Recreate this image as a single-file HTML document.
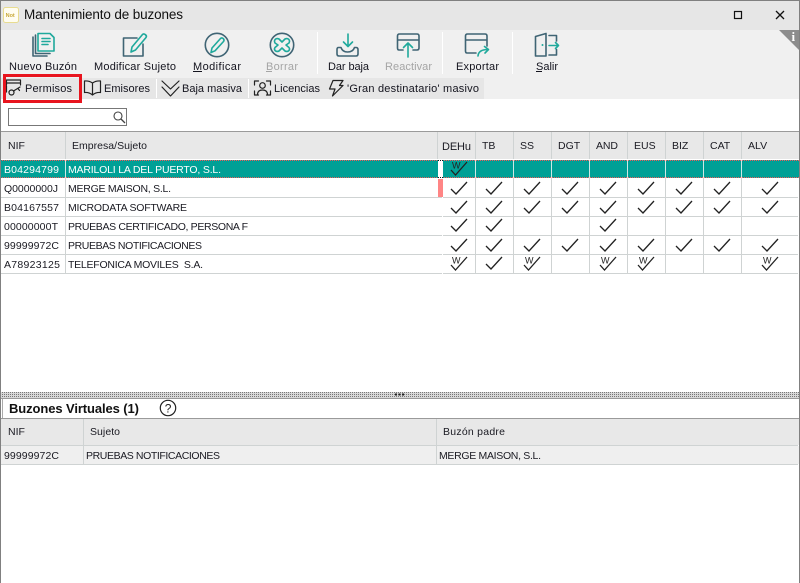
<!DOCTYPE html>
<html><head><meta charset="utf-8"><title>Mantenimiento de buzones</title>
<style>
html,body{margin:0;padding:0;background:#fff;width:800px;height:583px;overflow:hidden}
svg{display:block}
text{font-family:"Liberation Sans",Arial,sans-serif;fill:#111}
.tb{font-size:11px;fill:#14141e}
.dis{font-size:11px;fill:#a5a5a5}
.t{font-size:10.5px;fill:#1a1a22}
.h{font-size:10.5px;fill:#1a1a22}
.w{fill:#fff;font-size:10.5px}
.ic{fill:none;stroke:#3f6474;stroke-width:1.6;stroke-linejoin:round;stroke-linecap:round}
.te{fill:none;stroke:#1fa99c;stroke-width:1.6;stroke-linejoin:round;stroke-linecap:round}
.k{fill:none;stroke:#222;stroke-width:1.2;stroke-linejoin:round;stroke-linecap:round}
.l{stroke:#cfd3d3;stroke-width:1;shape-rendering:crispEdges}
</style></head><body>
<svg width="800" height="583" viewBox="0 0 800 583" xmlns="http://www.w3.org/2000/svg">
<defs>
<path id="c" d="M0 7 L5 12 L16 0" fill="none" stroke="#222" stroke-width="1.3"/>
<g id="wc"><text x="1" y="6.6" style="font-size:9px;fill:#222">W</text><path d="M0 8 L4.5 13 L16 0" fill="none" stroke="#222" stroke-width="1.3"/></g>
<pattern id="dots" width="2" height="2" patternUnits="userSpaceOnUse"><rect width="2" height="2" fill="#d8d8d8"/><rect width="1" height="1" fill="#777"/></pattern>
<pattern id="rd" width="2" height="1" patternUnits="userSpaceOnUse"><rect width="1" height="1" fill="#f05a5a"/><rect x="1" width="1" height="1" fill="#00a096"/></pattern>
</defs>

<rect width="800" height="583" fill="#fff"/>
<rect x="0" y="0" width="800" height="30" fill="#e6e6e6"/>
<rect x="0" y="30" width="800" height="69" fill="#f0f0f0"/>
<rect x="0" y="78" width="484" height="21" fill="#e6e6e6"/>

<!-- Title bar -->
<rect x="3.5" y="7.5" width="15" height="15" rx="2" fill="#fffdf0" stroke="#e8dc90"/>
<text x="5.6" y="17" style="font-size:5.5px;fill:#c9a93a;font-weight:bold">Not</text>
<text x="24" y="19" textLength="159" style="font-size:13.5px;fill:#111">Mantenimiento de buzones</text>
<rect x="734.5" y="11.5" width="7" height="7" fill="none" stroke="#111" stroke-width="1.2"/>
<path d="M776 11 L784 19 M784 11 L776 19" stroke="#111" stroke-width="1.3" fill="none"/>

<!-- info corner -->
<path d="M779 30 H799 V50 Z" fill="#8c8c8c"/>
<text x="791.5" y="41" style="font-family:'Liberation Serif',serif;font-weight:bold;font-size:13px;fill:#fff">i</text>

<!-- Toolbar separators -->
<path d="M317.5 32V74M442.5 32V74M512.5 32V74" stroke="#fff" stroke-width="1"/>

<!-- Nuevo Buzon icon -->
<path class="ic" d="M33 37V56H47M35.5 35V53.500H50"/>
<path class="te" d="M38 33.500H50L54 37.500V51H38Z M42 38.500H50M42 41.500H50M42 44.500H48"/>
<!-- Modificar sujeto -->
<path class="ic" d="M137 38H123.500V56H143V44"/>
<path class="te" d="M131 52L132 47L142.500 34.500C144 33 147.500 35.500 146 37.500L135.500 50Z"/>
<!-- Modificar -->
<circle class="ic" cx="217" cy="45" r="11.700"/>
<path class="te" d="M211 52.500L212 48L220.500 38.500C222.500 37 225 39.500 223.500 41.500L215 50.800Z"/>
<!-- Borrar -->
<circle class="ic" cx="282" cy="45" r="11.700"/>
<path class="te" d="M282 42L285 39C288 37.500 290.500 40 289 43L286 45L289 47.500C290.500 50 288 52.500 285 51L282 48L279 51C276 52.500 273.500 50 275 47.500L278 45L275 43C273.500 40 276 37.500 279 39Z"/>
<!-- Dar baja -->
<path class="te" d="M348 34V46M343.500 42L348 46.500L352.500 42"/>
<path class="ic" d="M341 47.500H338.500Q337 47.500 337 49.500V54Q337 56 339 56H356Q358 56 358 54V49.500Q358 47.500 356 47.500H354.500Q353 52 347.500 52Q342.500 52 341 47.500Z"/>
<!-- Reactivar -->
<path class="ic" d="M403 50H399Q397.500 50 397.500 48V36Q397.500 34 399.500 34H417Q419 34 419 36V48Q419 50 417 50H413M397.500 40H419"/>
<path class="te" d="M408 57V43M403.500 47.500L408 43L412.500 47.500"/>
<!-- Exportar -->
<path class="ic" d="M476 53H467Q465.500 53 465.500 51V36Q465.500 34 467.500 34H485Q487 34 487 36V46M465.500 40H487"/>
<path class="te" d="M478 56Q478.500 49.500 488 49.500M484.500 46.500L488.500 49.500L485 53"/>
<!-- Salir -->
<path class="ic" d="M535.500 36.500L546 33.500V56H535.500ZM549 35.500H556.500V41M549 55H556.500V49.500"/>
<path class="te" d="M549 45.500H558.500M555.500 42.500L558.500 45.500L555.500 48.500"/>
<circle cx="542.500" cy="45" r="1" fill="#1fa99c"/>

<!-- Toolbar labels -->
<text class="tb" x="9" y="70" textLength="68">Nuevo Buzón</text>
<text class="tb" x="94" y="70" textLength="82">Modificar Sujeto</text>
<text class="tb" x="193" y="70" textLength="48">Modificar</text>
<rect x="193" y="71" width="9" height="1" fill="#14141e"/>
<text class="dis" x="266" y="70" textLength="32">Borrar</text>
<rect x="266" y="71" width="6" height="1" fill="#a5a5a5"/>
<text class="tb" x="328" y="70" textLength="41">Dar baja</text>
<text class="dis" x="385" y="70" textLength="47">Reactivar</text>
<text class="tb" x="456" y="70" textLength="43">Exportar</text>
<text class="tb" x="536" y="70" textLength="22">Salir</text>
<rect x="536" y="71" width="6" height="1" fill="#14141e"/>

<!-- Tabs -->
<path d="M156.500 79V98M248.500 79V98M79.500 79V98" stroke="#fff"/>
<text class="tb" x="25" y="92" textLength="47">Permisos</text>
<text class="tb" x="104" y="92" textLength="46">Emisores</text>
<text class="tb" x="182" y="92" textLength="60">Baja masiva</text>
<text class="tb" x="274" y="92" textLength="46">Licencias</text>
<text class="tb" x="347" y="92" textLength="132">'Gran destinatario' masivo</text>
<!-- tab icons -->
<path class="k" d="M6.500 85V80H20.500V85M6.500 83H20.500M6.500 86V92"/>
<circle class="k" cx="11.500" cy="92.500" r="2.500"/>
<path class="k" d="M13.500 91L20 87M18 88.500L19.500 90.500"/>
<path class="k" d="M92.500 83Q89 80.500 84.500 81V92.500Q89 92 92.500 95Q96 92 100.500 92.500V81Q96 80.500 92.500 83ZM92.500 83V95"/>
<path class="k" d="M162 81L170.500 89L179 81M162 87L170.500 96L179 87"/>
<path class="k" d="M254.500 85V81H258.500M266.500 81H270.500V85M254.500 91V95H258.500M266.500 95H270.500V91"/>
<circle class="k" cx="262.500" cy="85.500" r="2.800"/>
<path class="k" d="M257.500 94Q258 90 262.500 90Q267 90 267.500 94"/>
<path class="k" d="M333 80.500H343L339.500 85.500H343L332.500 96L335 89H329.500Z"/>
<!-- Red highlight -->
<rect x="4.500" y="75.500" width="76" height="26" fill="none" stroke="#e8141e" stroke-width="3"/>

<!-- Search -->
<rect x="8.500" y="108.500" width="118" height="17" fill="#fff" stroke="#777"/>
<circle cx="118" cy="116" r="4" fill="none" stroke="#444" stroke-width="1.100"/>
<path d="M121 119L125 123" stroke="#444" stroke-width="1.300"/>

<!-- Main grid header -->
<rect x="1" y="132" width="798" height="27" fill="#e8e8e8"/>
<rect x="0" y="131" width="800" height="1" fill="#9a9a9a"/>
<path class="l" d="M65.500 132V159M437.500 132V159M475.500 132V159M513.500 132V159M551.500 132V159M589.500 132V159M627.500 132V159M665.500 132V159M703.500 132V159M741.500 132V159"/>
<text class="h" x="8" y="149">NIF</text>
<text class="h" x="72" y="149" textLength="75">Empresa/Sujeto</text>
<text x="442" y="150" textLength="29" style="font-size:11px;fill:#1a1a22">DEHu</text>
<text class="h" x="482" y="149">TB</text>
<text class="h" x="520" y="149">SS</text>
<text class="h" x="558" y="149">DGT</text>
<text class="h" x="596" y="149" textLength="22">AND</text>
<text class="h" x="634" y="149">EUS</text>
<text class="h" x="672" y="149">BIZ</text>
<text class="h" x="710" y="149">CAT</text>
<text class="h" x="748" y="149">ALV</text>

<!-- Grid lines -->
<path class="l" d="M1 197.500H442M443 197.500H798M1 216.500H442M443 216.500H798M1 235.500H442M443 235.500H798M1 254.500H442M443 254.500H798M1 273.500H442M443 273.500H798"/>
<path class="l" d="M65.500 178V273M475.500 178V273M513.500 178V273M551.500 178V273M589.500 178V273M627.500 178V273M665.500 178V273M703.500 178V273M741.500 178V273"/>
<rect x="438" y="179" width="5" height="18" fill="#ff8585"/>

<!-- Selected row -->
<rect x="1" y="160" width="798" height="18" fill="#00a096"/>
<rect x="1" y="160" width="798" height="1" fill="url(#rd)"/>
<rect x="1" y="177" width="798" height="1" fill="url(#rd)"/>
<path d="M65.500 160V178M475.500 160V178M513.500 160V178M551.500 160V178M589.500 160V178M627.500 160V178M665.500 160V178M703.500 160V178M741.500 160V178" stroke="#cfe8e4" stroke-width="1" shape-rendering="crispEdges"/>
<rect x="438" y="160" width="5" height="18" fill="#fff"/>
<path d="M438 160.500H443M438 177.500H443" stroke="#111" stroke-dasharray="1 1"/>
<use href="#wc" x="451" y="162"/>

<!-- Rows text -->
<text class="w" x="4" y="173" textLength="55">B04294799</text>
<text class="w" x="68" y="173" textLength="153">MARILOLI LA DEL PUERTO, S.L.</text>
<text class="t" x="4" y="192" textLength="54">Q0000000J</text>
<text class="t" x="68" y="192" textLength="103">MERGE MAISON, S.L.</text>
<text class="t" x="4" y="211" textLength="55">B04167557</text>
<text class="t" x="68" y="211" textLength="119">MICRODATA SOFTWARE</text>
<text class="t" x="4" y="230" textLength="54">00000000T</text>
<text class="t" x="68" y="230" textLength="180">PRUEBAS CERTIFICADO, PERSONA F</text>
<text class="t" x="4" y="249" textLength="55">99999972C</text>
<text class="t" x="68" y="249" textLength="134">PRUEBAS NOTIFICACIONES</text>
<text class="t" x="4" y="268" textLength="56">A78923125</text>
<text class="t" x="68" y="268" textLength="135" xml:space="preserve">TELEFONICA MOVILES  S.A.</text>

<!-- Checks row 2 -->
<use href="#c" x="451" y="182"/><use href="#c" x="486" y="182"/><use href="#c" x="524" y="182"/><use href="#c" x="562" y="182"/><use href="#c" x="600" y="182"/><use href="#c" x="638" y="182"/><use href="#c" x="676" y="182"/><use href="#c" x="714" y="182"/><use href="#c" x="762" y="182"/>
<!-- row 3 -->
<use href="#c" x="451" y="201"/><use href="#c" x="486" y="201"/><use href="#c" x="524" y="201"/><use href="#c" x="562" y="201"/><use href="#c" x="600" y="201"/><use href="#c" x="638" y="201"/><use href="#c" x="676" y="201"/><use href="#c" x="714" y="201"/><use href="#c" x="762" y="201"/>
<!-- row 4 -->
<use href="#c" x="451" y="219"/><use href="#c" x="486" y="219"/><use href="#c" x="600" y="219"/>
<!-- row 5 -->
<use href="#c" x="451" y="239"/><use href="#c" x="486" y="239"/><use href="#c" x="524" y="239"/><use href="#c" x="562" y="239"/><use href="#c" x="600" y="239"/><use href="#c" x="638" y="239"/><use href="#c" x="676" y="239"/><use href="#c" x="714" y="239"/><use href="#c" x="762" y="239"/>
<!-- row 6 -->
<use href="#wc" x="451" y="257"/><use href="#c" x="486" y="257"/><use href="#wc" x="524" y="257"/><use href="#wc" x="600" y="257"/><use href="#wc" x="638" y="257"/><use href="#wc" x="762" y="257"/>

<!-- Splitter -->
<rect x="1" y="392" width="798" height="6" fill="url(#dots)"/>
<rect x="1" y="398" width="798" height="1" fill="#9a9a9a"/>
<path d="M395 394.500h2M398.500 394.500h2M402 394.500h2" stroke="#222" stroke-width="2"/>

<!-- Lower panel -->
<rect x="2" y="399" width="1" height="19" fill="#aaa"/>
<text x="9" y="413" textLength="130" style="font-size:13px;font-weight:bold;fill:#111">Buzones Virtuales (1)</text>
<circle cx="168" cy="408" r="7.700" fill="#fff" stroke="#222" stroke-width="1.200"/>
<text x="164.800" y="412.500" style="font-size:12px;fill:#222">?</text>
<rect x="1" y="418" width="798" height="1" fill="#9a9a9a"/>
<rect x="1" y="419" width="798" height="26" fill="#e8e8e8"/>
<rect x="1" y="446" width="798" height="18" fill="#efefef"/>
<path class="l" d="M1 445.500H798M1 464.500H798M83.500 419V464M436.500 419V464"/>
<text class="h" x="8" y="435">NIF</text>
<text class="h" x="90" y="435" textLength="30">Sujeto</text>
<text class="h" x="443" y="435" textLength="62">Buzón padre</text>
<text class="t" x="4" y="459" textLength="55">99999972C</text>
<text class="t" x="86" y="459" textLength="134">PRUEBAS NOTIFICACIONES</text>
<text class="t" x="439" y="459" textLength="102">MERGE MAISON, S.L.</text>

<!-- Window border -->
<rect x="0" y="0" width="800" height="1" fill="#808080"/>
<rect x="0" y="0" width="1" height="583" fill="#808080"/>
<rect x="799" y="0" width="1" height="583" fill="#808080"/>
</svg>
</body></html>
